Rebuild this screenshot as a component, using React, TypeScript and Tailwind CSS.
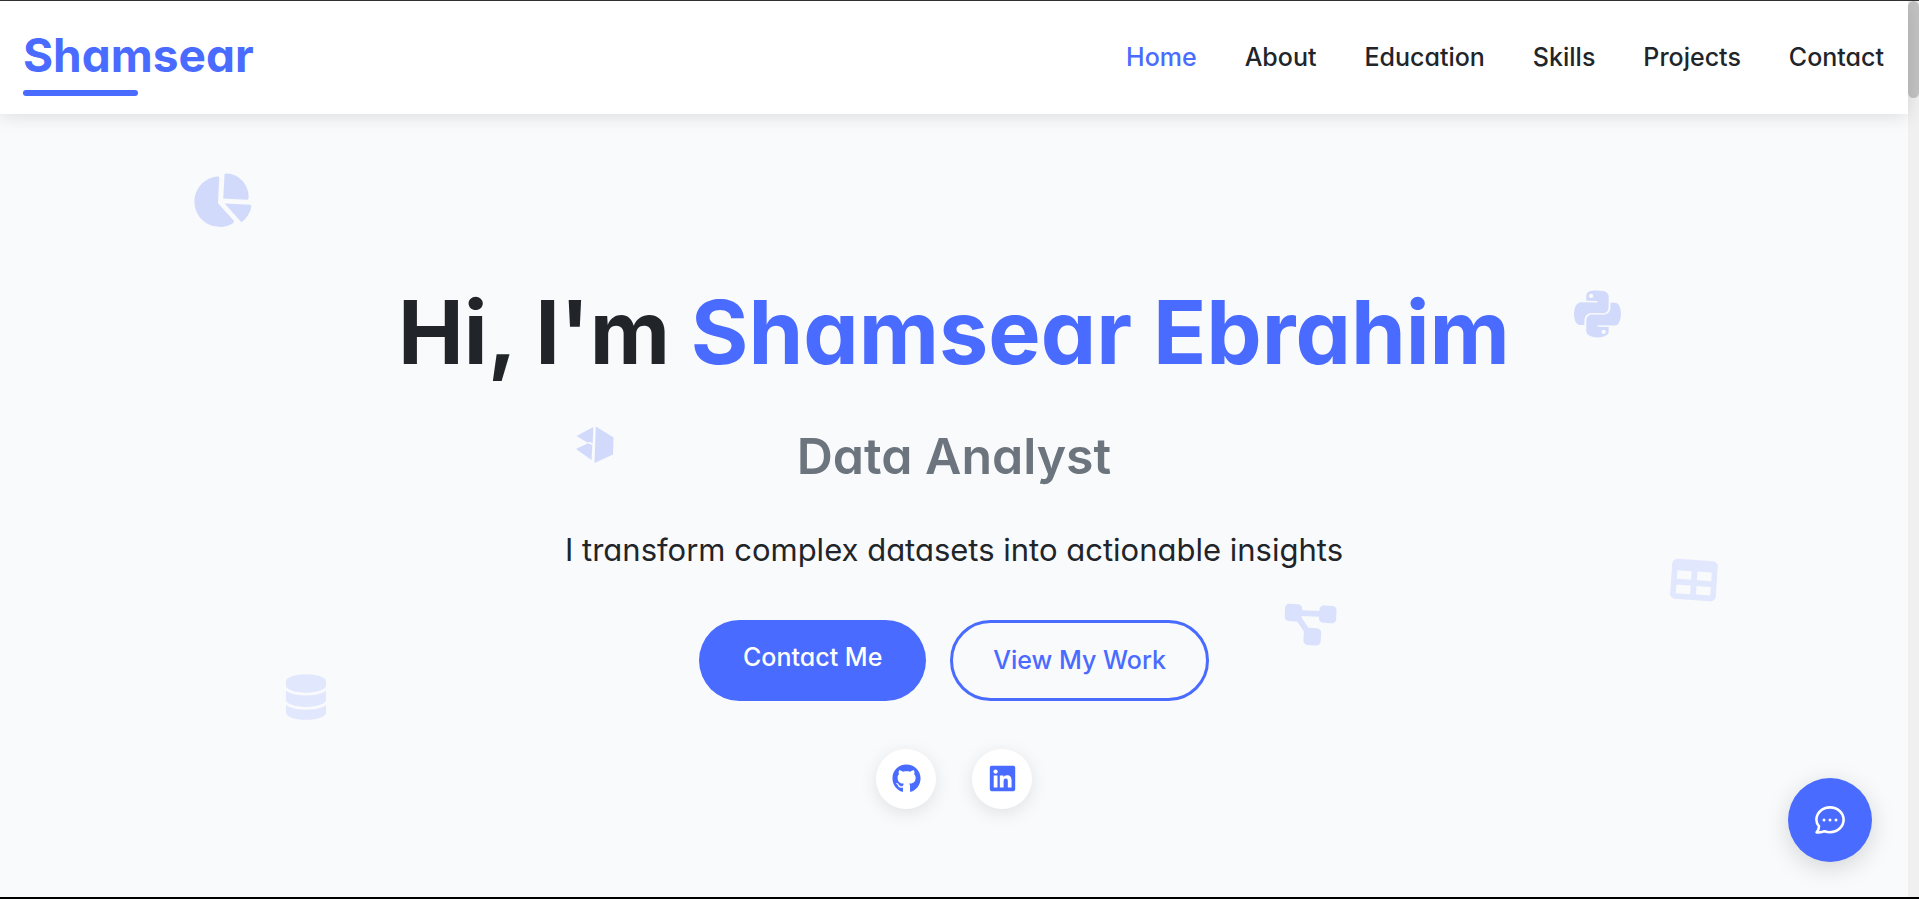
import React from "react";
import {
  FaChartPie,
  FaDatabase,
  FaDiagramProject,
  FaGithub,
  FaLinkedin,
  FaPython,
  FaTable,
} from "react-icons/fa6";

const links = ["Home", "About", "Education", "Skills", "Projects", "Contact"];

function PrismIcon() {
  return (
    <svg viewBox="0 0 38 38" className="size-[38px]" fill="currentColor" aria-hidden="true">
      <path d="M.500 10 17.300 1 16.700 17.500C15 16 13 15.500 11.500 16.500ZM0 23 11.500 17.500C13 17.500 15 18 16.300 19.500L15.500 34ZM19.800 .500 37.500 11.500 37 28.500 18.500 37Z" />
    </svg>
  );
}

function ChatIcon() {
  return (
    <svg viewBox="0 0 30 28" className="h-[28px] w-[30px]" fill="none" aria-hidden="true">
      <path
        d="M4 20.2C2.300 18.400 1.400 16.200 1.400 13.800 1.400 7 7.400 1.400 15 1.400S28.600 7 28.600 13.800 22.600 26.200 15 26.200C13 26.200 11.200 25.800 9.600 25.200 7.500 26.300 4.500 26.600 1.600 26.400 3.200 24.800 4 22.500 4 20.200Z"
        stroke="currentColor"
        strokeWidth="2.600"
        strokeLinejoin="round"
      />
      <circle cx="9" cy="14" r="1.500" fill="currentColor" />
      <circle cx="15" cy="14" r="1.500" fill="currentColor" />
      <circle cx="21" cy="14" r="1.500" fill="currentColor" />
    </svg>
  );
}

function FloatingIcons() {
  return (
    <div className="pointer-events-none text-[#4a6bff]" aria-hidden="true">
      <FaChartPie className="absolute left-[10%] top-[7.5%] h-[54px] w-[61px] rotate-3 opacity-[0.22]" />
      <FaPython className="absolute left-[82.5%] top-[22.1%] h-[54px] w-[47px] rotate-1 opacity-[0.22]" />
      <div className="absolute left-[30.2%] top-[39.8%] opacity-[0.22]">
        <PrismIcon />
      </div>
      <FaTable className="absolute left-[87.6%] top-[56.6%] size-[46px] rotate-4 opacity-[0.13]" />
      <FaDiagramProject className="absolute left-[67.3%] top-[62.3%] h-[46px] w-[52px] rotate-3 opacity-[0.17]" />
      <FaDatabase className="absolute left-[15%] top-[71.5%] h-[46px] w-[40px] opacity-[0.13]" />
    </div>
  );
}

export default function App() {
  return (
    <div className="flex h-screen flex-col border-t border-b-2 border-t-[#333] border-b-black bg-[#f9fafc] font-['Inter',sans-serif] text-[#212529] [font-feature-settings:'cv11']">
      <div className="flex min-h-0 flex-1">
        <div className="flex min-w-0 flex-1 flex-col">
          <header className="relative z-10 flex items-center justify-between bg-white px-6 pt-6 pb-[18px] shadow-[0_2px_18px_rgba(0,0,0,0.12)]">
            <a href="#home" className="-ml-px flex flex-col gap-1 text-[#4a6bff]">
              <span className="text-[46px] leading-[61px] font-bold">Shamsear</span>
              <span className="h-[6px] w-1/2 rounded-full bg-[#4a6bff]" />
            </a>
            <nav className="flex gap-12 pb-2 text-[25px] leading-9 font-medium">
              {links.map((label, i) => (
                <a key={label} href={`#${label.toLowerCase()}`} className={i === 0 ? "text-[#4a6bff]" : ""}>
                  {label}
                </a>
              ))}
            </nav>
          </header>

          <main className="relative flex flex-1 flex-col items-center overflow-hidden pt-[166px] text-center">
            <FloatingIcons />
            <h1 className="text-[88px] leading-[104px] font-bold">
              Hi, I'm <span className="text-[#4a6bff]">Shamsear Ebrahim</span>
            </h1>
            <h2 className="mt-9 text-[50px] leading-[72px] font-semibold text-[#6c757d]">Data Analyst</h2>
            <p className="mt-8 text-[31px] leading-[52px]">
              I transform complex datasets into actionable insights
            </p>
            <div className="mt-11 flex gap-6 text-[25px] leading-[43px] font-medium">
              <a href="#contact" className="rounded-full bg-[#4a6bff] px-11 pt-4 pb-[22px] text-white">
                Contact Me
              </a>
              <a href="#projects" className="rounded-full border-3 border-[#4a6bff] px-10 py-4 text-[#4a6bff]">
                View My Work
              </a>
            </div>
            <div className="mt-12 flex gap-9 text-[29px] text-[#4a6bff]">
              <a href="#github" aria-label="GitHub" className="flex size-[60px] items-center justify-center rounded-full bg-white pb-0.5 shadow-[0_4px_18px_rgba(0,0,0,0.1)]">
                <FaGithub />
              </a>
              <a href="#linkedin" aria-label="LinkedIn" className="flex size-[60px] items-center justify-center rounded-full bg-white pb-0.5 shadow-[0_4px_18px_rgba(0,0,0,0.1)]">
                <FaLinkedin />
              </a>
            </div>
            <button type="button" aria-label="Open chat" className="absolute right-9 bottom-[35px] flex size-[84px] items-center justify-center rounded-full bg-[#4a6bff] text-white shadow-[0_6px_24px_rgba(0,0,0,0.15)]">
              <ChatIcon />
            </button>
          </main>
        </div>
        <div className="w-[11px] bg-[#f0f0f0]" aria-hidden="true">
          <div className="h-[97px] rounded-full bg-[#c2c2c2]" />
        </div>
      </div>
    </div>
  );
}
